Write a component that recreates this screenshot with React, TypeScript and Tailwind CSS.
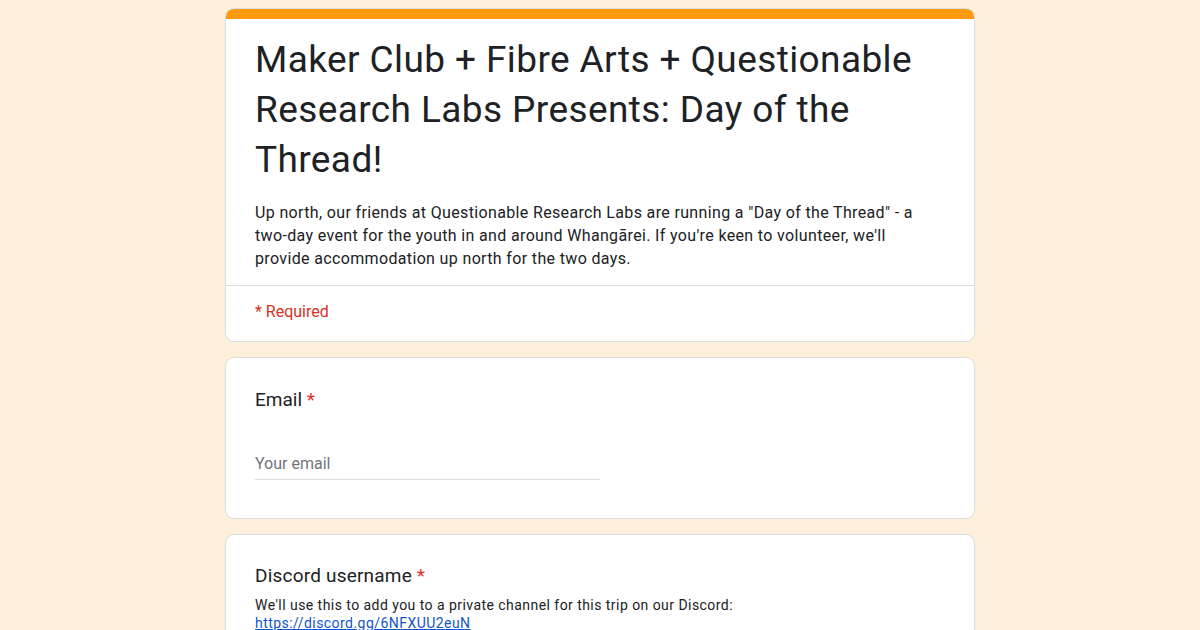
import React from 'react';

const sans = { fontFamily: 'Roboto, "Liberation Sans", sans-serif' };

export default function App() {
  return (
    <div className="min-h-screen w-full bg-[#feefdb] flex justify-center" style={sans}>
      <div className="w-[750px] pt-[8px] flex flex-col gap-[15px]">
        {/* Header card */}
        <div className="bg-white rounded-[9px] border border-[#dadce0] overflow-hidden">
          <div className="h-[11px] bg-[#ff9a0a] -mx-px -mt-px" />
          <div className="px-[29px] pt-[16px] pb-[15px] border-b border-[#dadce0]">
            <h1 className="text-[37px] leading-[50px] text-[#202124] font-normal tracking-[0.4px]">
              Maker Club + Fibre Arts + Questionable Research Labs Presents: Day of the Thread!
            </h1>
            <p className="mt-[16px] pr-[25px] text-[16px] leading-[23px] text-[#202124] tracking-[0.35px]">
              Up north, our friends at Questionable Research Labs are running a "Day of the Thread" - a two-day
              event for the youth in and around Whangārei. If you're keen to volunteer, we'll provide accommodation
              up north for the two days.
            </p>
          </div>
          <div className="px-[29px] pt-[14px] pb-[18px] text-[16px] leading-[23px] text-[#d93025]">
            * Required
          </div>
        </div>

        {/* Email card */}
        <div className="bg-white rounded-[9px] border border-[#dadce0] px-[29px] pt-[28px] pb-[38px]">
          <div className="text-[19px] leading-[28px] text-[#202124]">
            Email <span className="text-[#d93025]">*</span>
          </div>
          <div className="mt-[38px] w-[345px] border-b border-[#dadce0] pb-[4px] text-[16px] leading-[23px] text-[#70757a]">
            Your email
          </div>
        </div>

        {/* Discord card */}
        <div className="bg-white rounded-[9px] border border-[#dadce0] px-[29px] pt-[27px] pb-[30px]">
          <div className="text-[19px] leading-[28px] text-[#202124] tracking-[0.2px]">
            Discord username <span className="text-[#d93025]">*</span>
          </div>
          <p className="mt-[6px] text-[14px] leading-[18px] text-[#202124] tracking-[0.45px]">
            We'll use this to add you to a private channel for this trip on our Discord:
            <br />
            <a href="#" className="text-[#1155cc] underline">https://discord.gg/6NFXUU2euN</a>
          </p>
        </div>
      </div>
    </div>
  );
}
